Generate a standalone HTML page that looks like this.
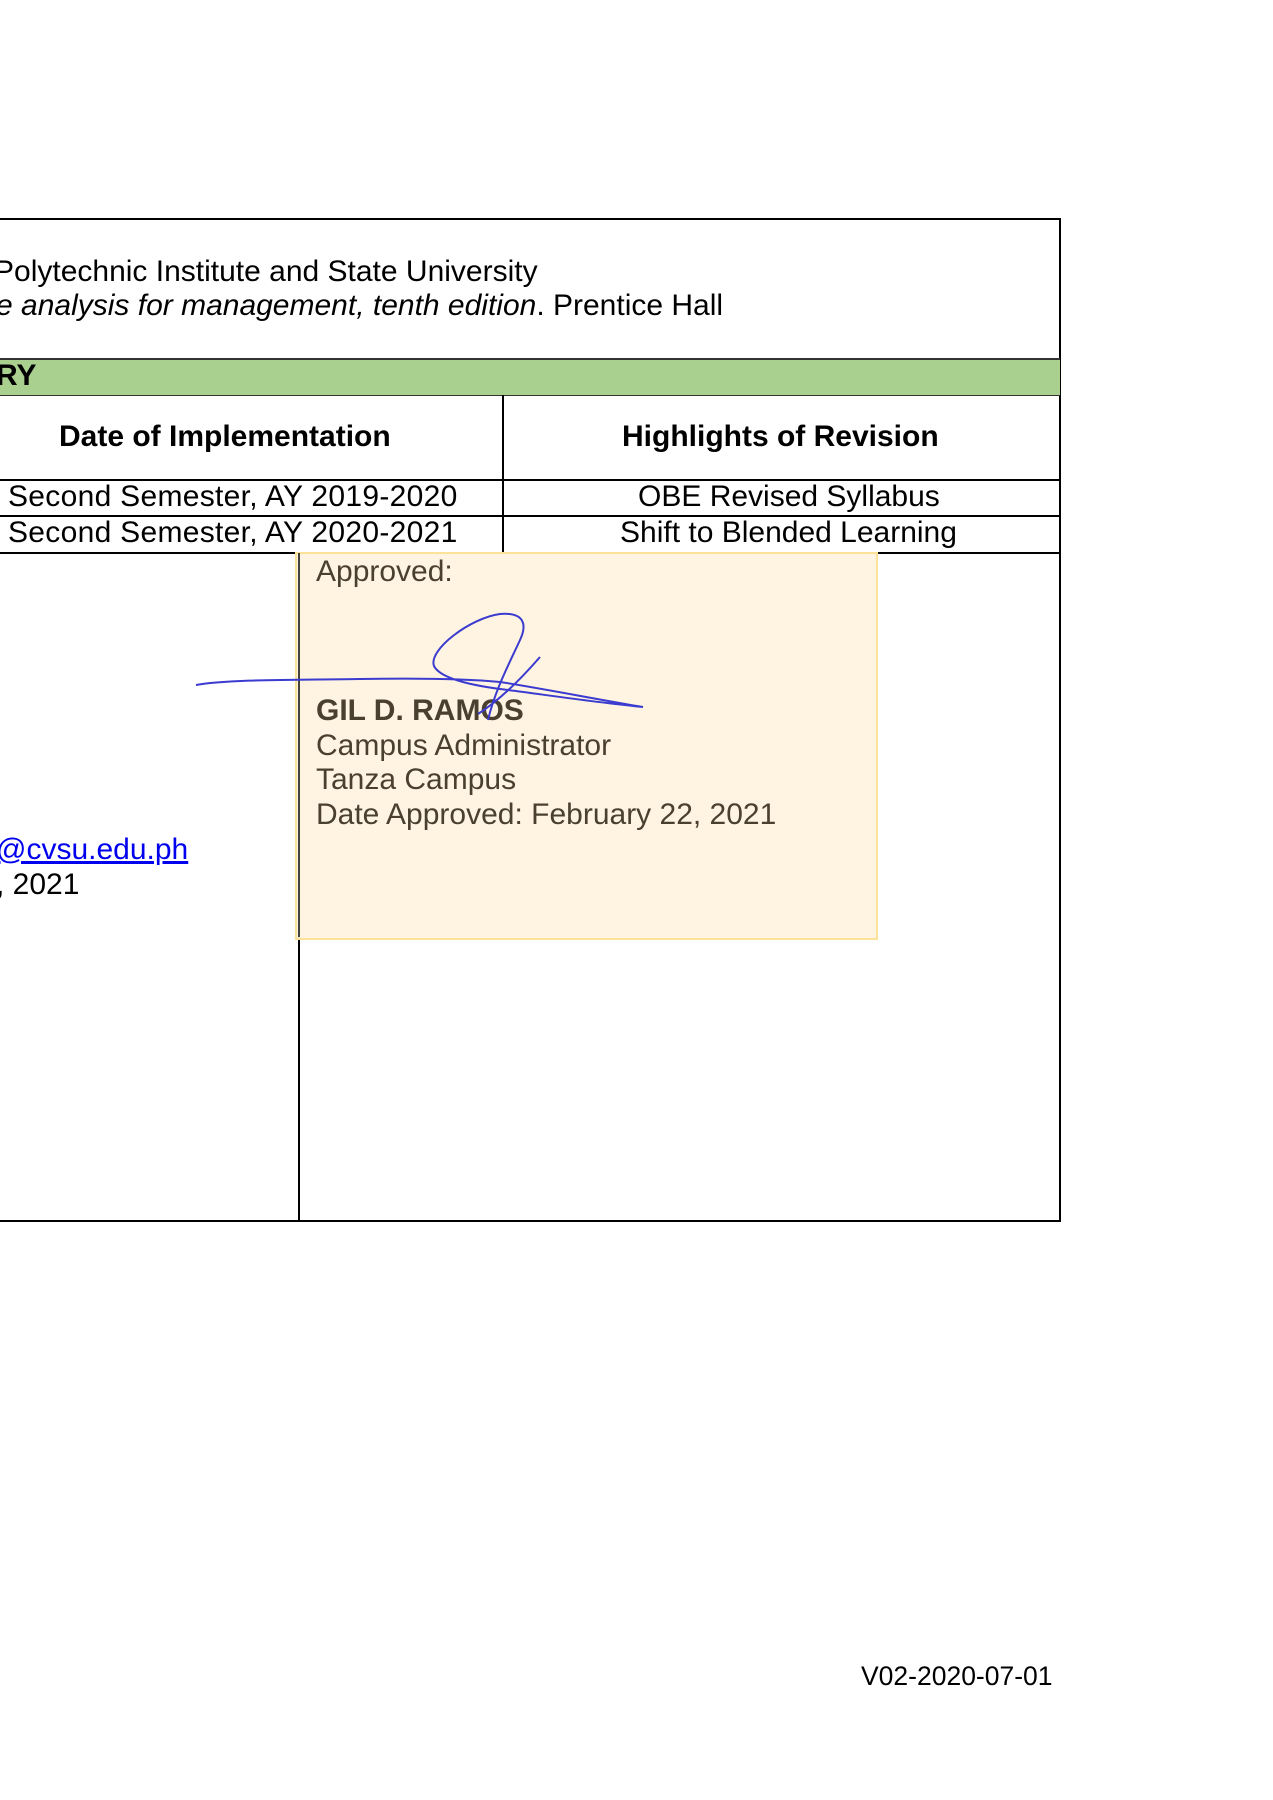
<!DOCTYPE html>
<html><head><meta charset="utf-8"><style>
body{margin:0;width:1273px;height:1800px;background:#fff;position:relative;overflow:hidden;font-family:"Liberation Sans",sans-serif;font-size:30px;color:#000}
.a{position:absolute;white-space:nowrap;line-height:1}
.h{position:absolute;background:#000}
</style></head><body>
<div class="h" style="left:0;top:218px;width:1061px;height:1.5px"></div>
<div class="h" style="left:1059px;top:218px;width:1.5px;height:1003px"></div>
<div class="a" style="left:-6px;top:257px">Polytechnic Institute and State University</div>
<div class="a" style="left:-4px;top:291px"><i>e analysis for management, tenth edition</i>. Prentice Hall</div>
<div style="position:absolute;left:0;top:358px;width:1060px;height:35px;background:#a9d08e;border-top:2px solid #333;border-bottom:1.5px solid #333"></div>
<div class="a" style="left:-4px;top:361px;font-weight:bold">RY</div>
<div class="h" style="left:502px;top:395px;width:1.5px;height:158px"></div>
<div class="a" style="left:59px;top:422px;font-weight:bold">Date of Implementation</div>
<div class="a" style="left:622px;top:422px;font-weight:bold">Highlights of Revision</div>
<div class="h" style="left:0;top:479px;width:1060px;height:1.5px"></div>
<div class="h" style="left:0;top:515px;width:1060px;height:1.5px"></div>
<div class="h" style="left:0;top:552px;width:1060px;height:1.5px"></div>
<div class="a" style="left:8px;top:482px;letter-spacing:0.3px">Second Semester, AY 2019-2020</div>
<div class="a" style="left:638px;top:482px">OBE Revised Syllabus</div>
<div class="a" style="left:8px;top:518px;letter-spacing:0.3px">Second Semester, AY 2020-2021</div>
<div class="a" style="left:620px;top:518px">Shift to Blended Learning</div>
<div class="h" style="left:0;top:1220px;width:1061px;height:1.5px"></div>
<div class="h" style="left:298px;top:553px;width:1.5px;height:668px"></div>
<div class="a" style="left:-4px;top:835px;color:#00e;text-decoration:underline">@cvsu.edu.ph</div>
<div class="a" style="left:-4px;top:870px">, 2021</div>
<div style="position:absolute;left:295px;top:552px;width:579px;height:384px;background:rgba(254,243,222,0.92);border:2px solid #fde39a"></div>
<div class="h" style="left:298px;top:553px;width:1.5px;height:384px;opacity:.7"></div>
<div style="position:absolute;left:316px;top:555px;color:#4a4030;line-height:34.5px">Approved:</div>
<div style="position:absolute;left:316px;top:694px;color:#4a4030;line-height:34.5px"><b>GIL D. RAMOS</b><br>Campus Administrator<br>Tanza Campus<br>Date Approved: February 22, 2021</div>
<svg style="position:absolute;left:0;top:0" width="1273" height="1800" fill="none" stroke="#3b3bd0" stroke-width="2">
<path d="M196 685 C230 679 300 680 360 679 C420 678 470 679 500 682 C540 688 600 700 643 707 C600 703 540 694 500 689 C470 685 440 678 434 666 C428 650 470 618 500 614 C525 612 527 625 520 640 C510 662 495 690 488 720"/>
<path d="M540 657 C520 680 500 700 478 714"/>
</svg>
<div class="a" style="left:861px;top:1663px;font-size:26.5px">V02-2020-07-01</div>
</body></html>
